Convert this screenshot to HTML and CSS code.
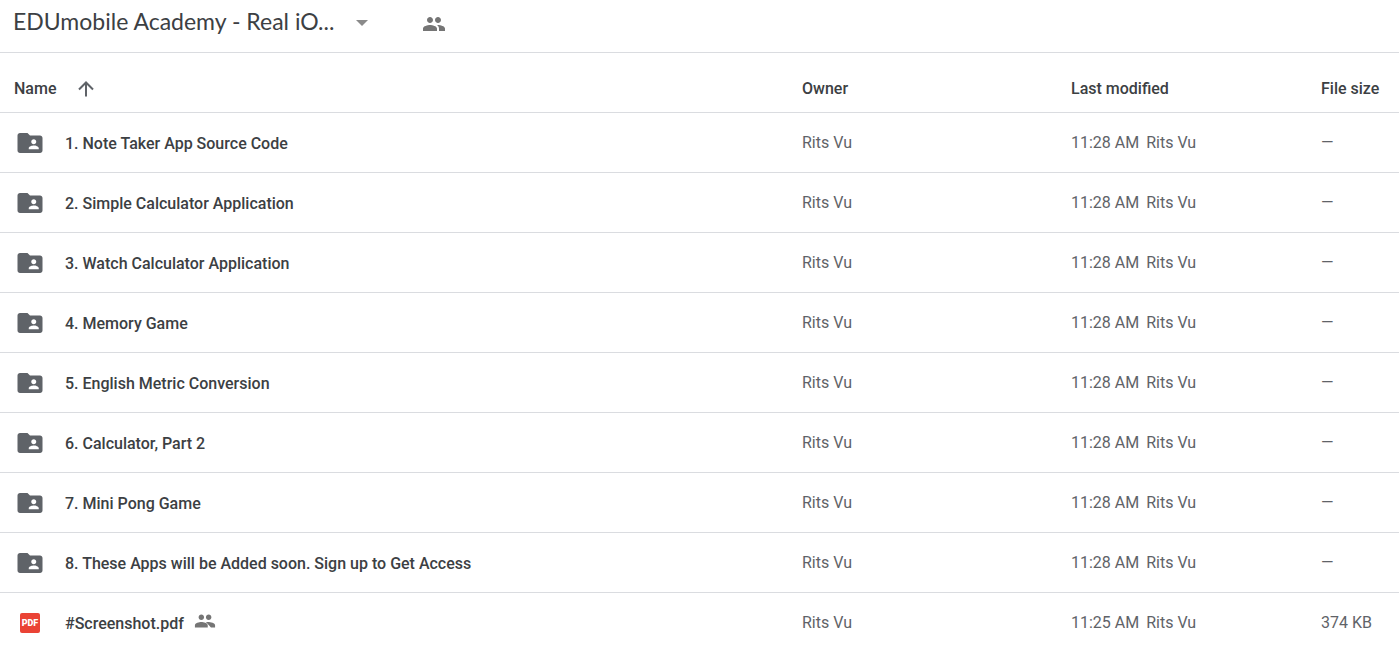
FILE: index.html
```html
<!DOCTYPE html>
<html lang="en">
<head>
    <meta charset="UTF-8">
    <meta name="viewport" content="width=device-width, initial-scale=1.0">
    <title>EDUmobile Academy</title>
    <link rel="stylesheet" href="styles.css">
</head>
<body>
    <!-- shared icons -->
    <svg class="sprite" aria-hidden="true">
        <symbol id="folder" viewBox="0 0 24 24">
            <path d="M20 6h-8l-2-2H4c-1.1 0-2 .9-2 2v12c0 1.1.9 2 2 2h16c1.1 0 2-.9 2-2V8c0-1.1-.9-2-2-2zm-5 3c1.1 0 2 .9 2 2s-.9 2-2 2-2-.9-2-2 .9-2 2-2zm4 8h-8v-1c0-1.33 2.67-2 4-2s4 .67 4 2v1z"/>
        </symbol>
        <symbol id="people" viewBox="0 0 24 24">
            <path d="M16 11c1.66 0 2.99-1.34 2.99-3S17.66 5 16 5s-3 1.34-3 3 1.34 3 3 3zm-8 0c1.66 0 2.99-1.34 2.99-3S9.66 5 8 5 5 6.34 5 8s1.34 3 3 3zm0 2c-2.33 0-7 1.17-7 3.5V19h14v-2.5C15 14.17 10.33 13 8 13zm8 0c-.29 0-.62.02-.97.05 1.16.84 1.97 1.97 1.97 3.45V19h6v-2.5c0-2.33-4.67-3.5-7-3.5z"/>
        </symbol>
        <symbol id="people-small" viewBox="0 0 24 24">
            <path d="M16 11c1.66 0 2.99-1.34 2.99-3S17.66 5 16 5s-3 1.34-3 3 1.34 3 3 3zm-8 0c1.66 0 2.99-1.34 2.99-3S9.66 5 8 5 5 6.34 5 8s1.34 3 3 3zm0 2c-2.33 0-7 1.17-7 3.5V19h14v-2.500C15 14.17 10.33 13 8 13zm7 0c-.6 0-1.300.1-2 .2L18.500 19H23v-2.500C23 14.17 18.330 13 15 13z"/>
        </symbol>
    </svg>

    <div class="drive">
        <header class="toolbar">
            <h1><button type="button" class="title">
                <span>EDUmobile Academy - Real iO...</span>
                <svg class="caret" viewBox="0 0 12 6"><path d="M0 0h12L6 6z"/></svg>
            </button></h1>
            <button type="button" class="share" aria-label="Shared">
                <svg class="people"><use href="#people"/></svg>
            </button>
        </header>

        <table class="files">
            <thead>
                <tr>
                    <th class="name" scope="col">
                        <button type="button" class="sort">Name
                            <svg class="arrow" viewBox="0 0 16 16"><path d="M8 15.5V1.5M1 8.5l7-7 7 7"/></svg>
                        </button>
                    </th>
                    <th class="owner" scope="col">Owner</th>
                    <th class="modified" scope="col">Last modified</th>
                    <th class="size" scope="col">File size</th>
                </tr>
            </thead>
            <tbody>
                <tr>
                    <td><div class="file"><svg class="folder"><use href="#folder"/></svg><span>1. Note Taker App Source Code</span></div></td>
                    <td>Rits Vu</td>
                    <td>11:28 AM <span class="by">Rits Vu</span></td>
                    <td>—</td>
                </tr>
                <tr>
                    <td><div class="file"><svg class="folder"><use href="#folder"/></svg><span>2. Simple Calculator Application</span></div></td>
                    <td>Rits Vu</td>
                    <td>11:28 AM <span class="by">Rits Vu</span></td>
                    <td>—</td>
                </tr>
                <tr>
                    <td><div class="file"><svg class="folder"><use href="#folder"/></svg><span>3. Watch Calculator Application</span></div></td>
                    <td>Rits Vu</td>
                    <td>11:28 AM <span class="by">Rits Vu</span></td>
                    <td>—</td>
                </tr>
                <tr>
                    <td><div class="file"><svg class="folder"><use href="#folder"/></svg><span>4. Memory Game</span></div></td>
                    <td>Rits Vu</td>
                    <td>11:28 AM <span class="by">Rits Vu</span></td>
                    <td>—</td>
                </tr>
                <tr>
                    <td><div class="file"><svg class="folder"><use href="#folder"/></svg><span>5. English Metric Conversion</span></div></td>
                    <td>Rits Vu</td>
                    <td>11:28 AM <span class="by">Rits Vu</span></td>
                    <td>—</td>
                </tr>
                <tr>
                    <td><div class="file"><svg class="folder"><use href="#folder"/></svg><span>6. Calculator, Part 2</span></div></td>
                    <td>Rits Vu</td>
                    <td>11:28 AM <span class="by">Rits Vu</span></td>
                    <td>—</td>
                </tr>
                <tr>
                    <td><div class="file"><svg class="folder"><use href="#folder"/></svg><span>7. Mini Pong Game</span></div></td>
                    <td>Rits Vu</td>
                    <td>11:28 AM <span class="by">Rits Vu</span></td>
                    <td>—</td>
                </tr>
                <tr>
                    <td><div class="file"><svg class="folder"><use href="#folder"/></svg><span>8. These Apps will be Added soon. Sign up to Get Access</span></div></td>
                    <td>Rits Vu</td>
                    <td>11:28 AM <span class="by">Rits Vu</span></td>
                    <td>—</td>
                </tr>
                <tr>
                    <td><div class="file"><b class="pdf">PDF</b><span>#Screenshot.pdf</span><svg class="people small"><use href="#people-small"/></svg></div></td>
                    <td>Rits Vu</td>
                    <td>11:25 AM <span class="by">Rits Vu</span></td>
                    <td>374 KB</td>
                </tr>
            </tbody>
        </table>
    </div>
</body>
</html>
```
FILE: styles.css
```css
* {
    box-sizing: border-box;
}
body {
    margin: 0;
    font-family: Roboto, Arial, sans-serif;
    font-size: 16px;
    color: #3c4043;
    background-color: #fff;
}
button {
    padding: 0;
    border: none;
    background: none;
    font: inherit;
    color: inherit;
    cursor: pointer;
}
svg {
    display: block;
    flex: none;
}
.sprite {
    display: none;
}
.drive {
    height: 100vh;
    overflow-y: auto;
    scrollbar-width: none;
}
.toolbar {
    display: flex;
    align-items: center;
    gap: 54px;
    height: 53px;
    padding: 0 13px 10px;
    border-bottom: 1px solid #dadce0;
}
h1 {
    margin: 0;
    font-family: Lato, sans-serif;
    font-size: 23px;
    font-weight: 400;
}
.title {
    display: flex;
    align-items: center;
    gap: 22px;
    white-space: nowrap;
}
.caret {
    width: 12px;
    height: 6px;
    margin-top: 4px;
    fill: #8a8a8a;
}
.share {
    margin-top: 6px;
}
.people {
    width: 24px;
    height: 24px;
    fill: #757575;
}
.people.small {
    width: 22px;
    height: 22px;
    margin: 0 0 3px 10px;
}
.files {
    width: 100%;
    table-layout: fixed;
    border-collapse: separate;
    border-spacing: 0;
}
th,
td {
    height: 60px;
    padding: 0;
    border-bottom: 1px solid #dadce0;
    text-align: left;
    white-space: nowrap;
}
th {
    padding-top: 12px;
    font-weight: 500;
}
td {
    color: #5f6368;
}
tr:last-child td {
    border-bottom-color: transparent;
}
thead tr:last-child th {
    border-bottom-color: #dadce0;
}
.owner {
    width: 269px;
}
.modified {
    width: 250px;
}
.size {
    width: 78px;
}
.sort {
    display: flex;
    align-items: center;
    gap: 22px;
    padding-left: 14px;
}
.arrow {
    width: 16px;
    height: 16px;
    fill: none;
    stroke: #5f6368;
    stroke-width: 2;
}
.file {
    display: flex;
    align-items: center;
    padding-left: 15px;
    color: #3c4043;
    font-weight: 500;
}
.file span {
    padding-top: 1px;
}
.folder {
    width: 30px;
    height: 30px;
    margin-right: 20px;
    fill: #5f6368;
}
.pdf {
    width: 20px;
    margin: 0 25px 0 5px;
    border-radius: 2px;
    background-color: #ea4335;
    color: #fff;
    font-size: 9px;
    font-weight: 900;
    line-height: 20px;
    text-align: center;
}
.by {
    margin-left: 3px;
}
```
